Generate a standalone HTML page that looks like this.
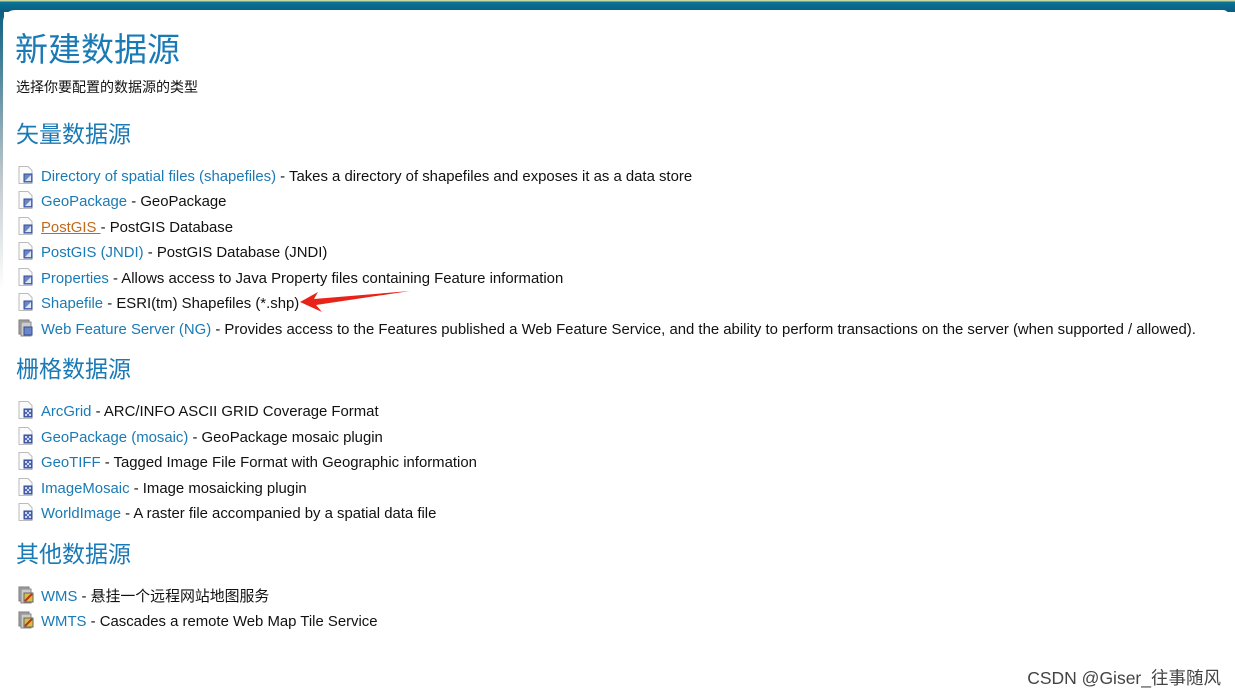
<!DOCTYPE html><html><head><meta charset="utf-8"><style>
body{margin:0;width:1235px;height:695px;overflow:hidden;background:#fff;font-family:"Liberation Sans","Noto Sans CJK SC",sans-serif;position:relative}
.top{position:absolute;left:0;top:0;width:1235px;height:12px;background:linear-gradient(#c8d8a0 0,#c8d8a0 1px,#0a7398 2px,#0b5f80 11px)}
.lstrip{position:absolute;left:0;top:10px;width:4px;height:280px;background:linear-gradient(#0b5f80,#c0c8cc 60%,#fff)}
.card{position:absolute;left:3px;top:10px;width:1226px;height:690px;background:#fff;border-top-left-radius:12px;border-top-right-radius:6px}
.a{position:absolute;left:0;top:0}
h1{position:absolute;left:15px;top:23px;margin:0;font-weight:normal;font-size:33px;color:#1a7ab5}
.sub{position:absolute;left:16px;top:77px;font-size:14px;color:#111}
h2{position:absolute;left:16px;margin:0;font-weight:normal;font-size:23px;color:#1a7ab5}
.it{position:absolute;left:18px;font-size:14.9px;color:#111;white-space:nowrap;height:20px;line-height:20px}
.it a{color:#1a7ab5;text-decoration:none}
.it a.u{color:#c06a1e;text-decoration:underline}
.ic{display:inline-block;width:16px;height:18px;vertical-align:-3px;margin-right:7px;position:relative}
.csdn{position:absolute;right:14px;top:665px;font-size:17.5px;color:#444}
</style></head><body>
<div class="top"></div><div class="lstrip"></div><div class="card"></div>
<svg width="0" height="0" style="position:absolute"><defs>
<g id="v"><path d="M1 .5h9l4 4v13H1z" fill="#fbfbfb" stroke="#bbb"/><rect x="6" y="8" width="8" height="8" fill="#6b86c8" stroke="#334a94"/><path d="M7 15l6-6v6z" fill="#dde6f5"/></g>
<g id="r"><path d="M1 .5h9l4 4v13H1z" fill="#fbfbfb" stroke="#bbb"/><rect x="6" y="8" width="8" height="8" fill="#5068b8" stroke="#334a94"/><path d="M7 9h2v2H7zm4 0h2v2h-2zM9 11h2v2H9zm-2 2h2v2H7zm4 0h2v2h-2z" fill="#cfd8f0"/></g>
<g id="s"><rect x="1" y="1" width="10" height="14" fill="#aaa" stroke="#777"/><rect x="3" y="3" width="10" height="14" fill="#ccc" stroke="#888"/><rect x="6" y="8" width="8" height="8" fill="#6b86c8" stroke="#334a94"/></g>
<g id="w"><rect x="1" y="1" width="10" height="14" fill="#aaa" stroke="#777"/><rect x="3" y="3" width="10" height="14" fill="#ccc" stroke="#888"/><rect x="6" y="7" width="9" height="9" fill="#d6c040" stroke="#666"/><path d="M7 15l7-7" stroke="#c03020" stroke-width="2"/></g>
</defs></svg>
<h1>新建数据源</h1>
<div class="sub">选择你要配置的数据源的类型</div>
<h2 style="top:115px">矢量数据源</h2>
<div class="it" style="top:166px"><svg class="ic"><use href="#v"/></svg><a>Directory of spatial files (shapefiles)</a> - Takes a directory of shapefiles and exposes it as a data store</div>
<div class="it" style="top:191px"><svg class="ic"><use href="#v"/></svg><a>GeoPackage</a> - GeoPackage</div>
<div class="it" style="top:217px"><svg class="ic"><use href="#v"/></svg><a class="u">PostGIS </a> - PostGIS Database</div>
<div class="it" style="top:242px"><svg class="ic"><use href="#v"/></svg><a>PostGIS (JNDI)</a> - PostGIS Database (JNDI)</div>
<div class="it" style="top:268px"><svg class="ic"><use href="#v"/></svg><a>Properties</a> - Allows access to Java Property files containing Feature information</div>
<div class="it" style="top:293px"><svg class="ic"><use href="#v"/></svg><a>Shapefile</a> - ESRI(tm) Shapefiles (*.shp)</div>
<div class="it" style="top:319px"><svg class="ic"><use href="#s"/></svg><a>Web Feature Server (NG)</a> - Provides access to the Features published a Web Feature Service, and the ability to perform transactions on the server (when supported / allowed).</div>
<svg class="a" width="1235" height="695" style="pointer-events:none"><path d="M300 302 L318 292 L314 299 L410 291 L316 305 L322 312Z" fill="#e8231a"/></svg>
<h2 style="top:350px">栅格数据源</h2>
<div class="it" style="top:401px"><svg class="ic"><use href="#r"/></svg><a>ArcGrid</a> - ARC/INFO ASCII GRID Coverage Format</div>
<div class="it" style="top:427px"><svg class="ic"><use href="#r"/></svg><a>GeoPackage (mosaic)</a> - GeoPackage mosaic plugin</div>
<div class="it" style="top:452px"><svg class="ic"><use href="#r"/></svg><a>GeoTIFF</a> - Tagged Image File Format with Geographic information</div>
<div class="it" style="top:478px"><svg class="ic"><use href="#r"/></svg><a>ImageMosaic</a> - Image mosaicking plugin</div>
<div class="it" style="top:503px"><svg class="ic"><use href="#r"/></svg><a>WorldImage</a> - A raster file accompanied by a spatial data file</div>
<h2 style="top:535px">其他数据源</h2>
<div class="it" style="top:586px"><svg class="ic"><use href="#w"/></svg><a>WMS</a> - 悬挂一个远程网站地图服务</div>
<div class="it" style="top:611px"><svg class="ic"><use href="#w"/></svg><a>WMTS</a> - Cascades a remote Web Map Tile Service</div>
<div class="csdn">CSDN @Giser_往事随风</div>
</body></html>
